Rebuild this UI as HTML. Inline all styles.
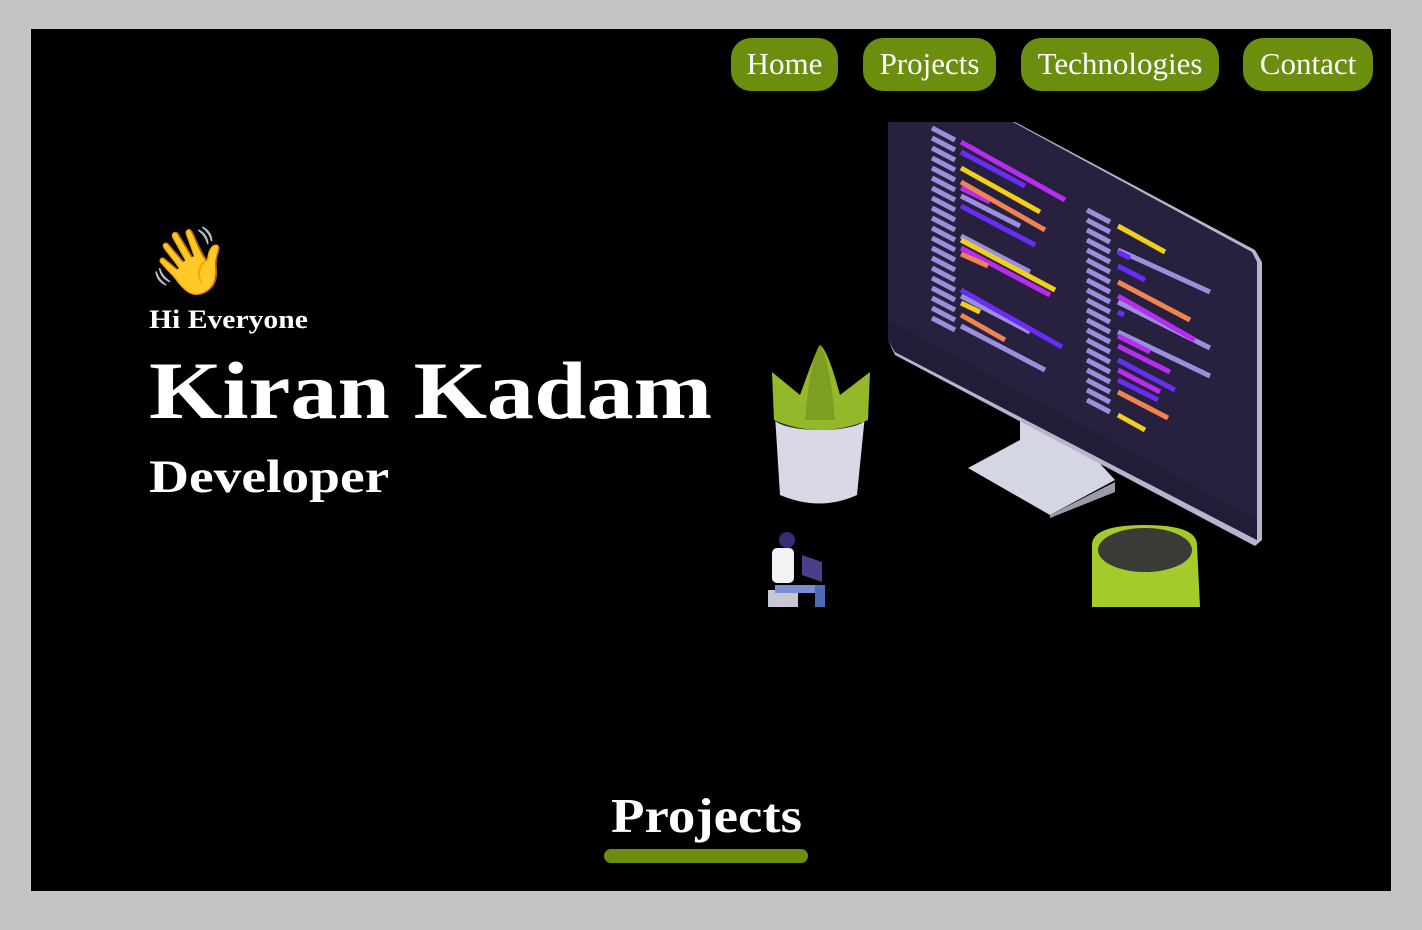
<!DOCTYPE html>
<html><head><meta charset="utf-8"><style>
*{margin:0;padding:0;box-sizing:border-box}
html,body{width:1422px;height:930px;background:#c4c4c4;overflow:hidden;font-family:"Liberation Serif",serif}
#main{position:absolute;left:31px;top:29px;width:1360px;height:862px;background:#000;overflow:hidden}
.nav a{position:absolute;top:9px;height:53px;background:#6b8e0e;color:#fff;border-radius:20px;font-size:31px;line-height:51px;text-align:center;text-decoration:none;white-space:nowrap}
.t{position:absolute;color:#fff;font-weight:bold;white-space:nowrap;transform-origin:0 50%}
</style></head><body>
<div id="main">
<div class="nav">
<a style="left:700px;width:107px">Home</a>
<a style="left:832px;width:133px">Projects</a>
<a style="left:990px;width:198px">Technologies</a>
<a style="left:1212px;width:130px">Contact</a>
</div>
<div class="t" style="left:117px;top:196px;font-size:66px;line-height:76px">👋</div>
<div class="t" style="left:118px;top:276px;font-size:26px;line-height:30px;transform:scaleX(1.14)">Hi Everyone</div>
<div class="t" style="left:118px;top:314px;font-size:82px;line-height:96px;transform:scaleX(1.15)">Kiran Kadam</div>
<div class="t" style="left:118px;top:420px;font-size:47px;line-height:56px;transform:scaleX(1.18)">Developer</div>
<div class="t" style="left:580px;top:759px;font-size:49px;line-height:56px;transform:scaleX(1.12)">Projects</div>
<div style="position:absolute;left:573px;top:820px;width:204px;height:14px;background:#6b8e0e;border-radius:7px"></div>
<svg style="position:absolute;left:0;top:0" width="1360" height="578" viewBox="31 29 1360 578">
<polygon points="1020,415 1060,420 1115,480 1050,515 968,468 1020,440" fill="#d5d6e4"/>
<polygon points="1050,515 1115,482 1115,492 1050,518" fill="#9a9cae"/>
<polygon points="888,122 1015,122 1255,250 1262,262 1262,540 1255,546 895,355 888,340" fill="#b8b4cc"/>
<polygon points="888,122 1013,122 1252,252 1257,262 1257,540 895,352 888,340" fill="#27213f"/>
<polygon points="888,320 1257,520 1257,540 895,352 888,340" fill="#221c38"/>
<g stroke-width="5">
<g stroke="#9b8fdd">
<path d="M932,128 L955,140 M932,138 L955,150 M932,148 L955,160 M932,158 L955,170 M932,168 L955,180 M932,178 L955,190 M932,188 L955,200 M932,198 L955,210 M932,208 L955,220 M932,218 L955,230 M932,228 L955,240 M932,238 L955,250 M932,248 L955,260 M932,258 L955,270 M932,268 L955,280 M932,278 L955,290 M932,288 L955,300 M932,298 L955,310 M932,308 L955,320 M932,318 L955,330"/>
<path d="M1087,210 L1110,222 M1087,220 L1110,232 M1087,230 L1110,242 M1087,240 L1110,252 M1087,250 L1110,262 M1087,260 L1110,272 M1087,270 L1110,282 M1087,280 L1110,292 M1087,290 L1110,302 M1087,300 L1110,312 M1087,310 L1110,322 M1087,320 L1110,332 M1087,330 L1110,342 M1087,340 L1110,352 M1087,350 L1110,362 M1087,360 L1110,372 M1087,370 L1110,382 M1087,380 L1110,392 M1087,390 L1110,402 M1087,400 L1110,412"/>
<path d="M961,196 L1020,226 M961,236 L1030,272 M961,296 L1030,332 M961,326 L1045,370 M1118,250 L1210,292 M1118,302 L1210,348 M1118,332 L1210,376"/>
</g>
<path stroke="#b82cf0" d="M961,142 L1065,200 M961,188 L990,202 M961,248 L1050,295 M1118,296 L1195,340 M1118,336 L1150,352 M1118,346 L1170,372 M1118,370 L1160,392"/>
<path stroke="#6a2cf5" d="M961,152 L1025,186 M961,206 L1035,245 M961,290 L1062,347 M1118,252 L1130,258 M1118,266 L1145,280 M1118,312 L1124,315 M1118,360 L1175,390 M1118,380 L1158,400"/>
<path stroke="#f2cf1c" d="M961,168 L1040,212 M961,240 L1055,290 M961,303 L980,312 M1118,226 L1165,252 M1118,415 L1145,430"/>
<path stroke="#f08450" d="M961,182 L1045,230 M961,254 L988,266 M961,315 L1005,340 M1118,282 L1190,320 M1118,392 L1168,418"/>
</g>
<path d="M775,415 L865,415 L857,495 Q820,512 780,495 Z" fill="#d8d8e6"/>
<ellipse cx="820" cy="418" rx="46" ry="12" fill="#2a2a2a"/>
<path d="M772,372 L800,395 Q818,345 820,345 Q828,350 840,395 L870,372 L868,420 Q820,440 774,420 Z" fill="#93b82a"/>
<path d="M805,420 Q810,360 820,345 Q830,360 835,420 Z" fill="#7d9e20"/>
<path d="M1092,545 Q1092,525 1145,525 Q1197,525 1197,545 L1200,607 L1092,607 Z" fill="#a5cb2b"/>
<ellipse cx="1145" cy="550" rx="47" ry="22" fill="#3a3a36"/>
<circle cx="787" cy="540" r="8" fill="#3a2a7a"/>
<rect x="772" y="548" width="22" height="35" rx="5" fill="#f2f2f4"/>
<polygon points="802,555 822,562 822,582 802,575" fill="#4a3f88"/>
<rect x="768" y="590" width="30" height="17" fill="#c8c8d4"/>
<rect x="775" y="585" width="45" height="8" fill="#7b8fd0"/>
<rect x="815" y="585" width="10" height="22" fill="#4d6ab5"/>
</svg>
</div>
</body></html>
